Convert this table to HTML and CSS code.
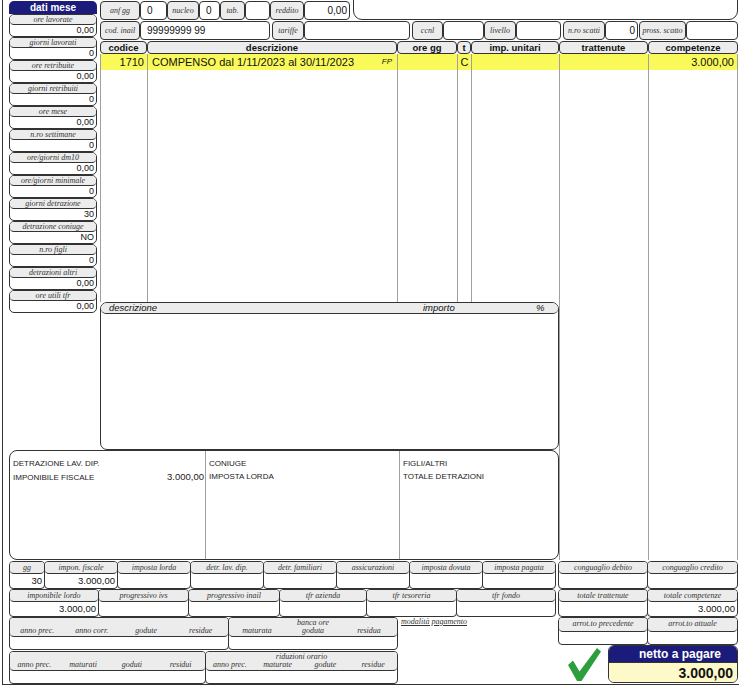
FILE: index.html
```html
<!DOCTYPE html>
<html lang="it">
<head>
<meta charset="utf-8">
<title>Cedolino</title>
<link rel="stylesheet" href="styles.css">
</head>
<body>
<div class="sheet">
  <aside class="panel">
    <div class="panel-head">dati mese</div>
    <div class="pf"><div class="pl">ore lavorate</div><div class="pv">0,00</div></div>
    <div class="pf"><div class="pl">giorni lavorati</div><div class="pv">0</div></div>
    <div class="pf"><div class="pl">ore retribuite</div><div class="pv">0,00</div></div>
    <div class="pf"><div class="pl">giorni retribuiti</div><div class="pv">0</div></div>
    <div class="pf"><div class="pl">ore mese</div><div class="pv">0,00</div></div>
    <div class="pf"><div class="pl">n.ro settimane</div><div class="pv">0</div></div>
    <div class="pf"><div class="pl">ore/giorni dm10</div><div class="pv">0,00</div></div>
    <div class="pf"><div class="pl">ore/giorni minimale</div><div class="pv">0</div></div>
    <div class="pf"><div class="pl">giorni detrazione</div><div class="pv">30</div></div>
    <div class="pf"><div class="pl">detrazione coniuge</div><div class="pv">NO</div></div>
    <div class="pf"><div class="pl">n.ro figli</div><div class="pv">0</div></div>
    <div class="pf"><div class="pl">detrazioni altri</div><div class="pv">0,00</div></div>
    <div class="pf"><div class="pl">ore utili tfr</div><div class="pv">0,00</div></div>
  </aside>

  <div class="topfields">
    <div class="trow trow1">
      <div class="box lab">anf gg</div>
      <div class="box val">0</div>
      <div class="box lab">nucleo</div>
      <div class="box val">0</div>
      <div class="box lab">tab.</div>
      <div class="box val"></div>
      <div class="box lab">reddito</div>
      <div class="box val right">0,00</div>
      <div class="bigbox"></div>
    </div>
    <div class="trow trow2">
      <div class="box lab">cod. inail</div>
      <div class="box val">99999999 99</div>
      <div class="box lab sp2">tariffe</div>
      <div class="box val"></div>
      <div class="box lab sp2">ccnl</div>
      <div class="box val"></div>
      <div class="box lab">livello</div>
      <div class="box val"></div>
      <div class="box lab sp2">n.ro scatti</div>
      <div class="box val right">0</div>
      <div class="box lab sp1">pross. scatto</div>
      <div class="box val"></div>
    </div>
  </div>

  <div class="tleft">
    <div class="tcol"><div class="th">codice</div><div class="tb"><div class="ty num">1710</div></div></div>
    <div class="tcol"><div class="th">descrizione</div><div class="tb"><div class="ty desc"><span>COMPENSO dal 1/11/2023 al 30/11/2023</span><span class="fp">FP</span></div></div></div>
    <div class="tcol"><div class="th">ore gg</div><div class="tb"><div class="ty"></div></div></div>
    <div class="tcol"><div class="th">t</div><div class="tb"><div class="ty ctr">C</div></div></div>
    <div class="tcol"><div class="th">imp. unitari</div><div class="tb"><div class="ty"></div></div></div>
  </div>

  <div class="tright">
    <div class="tcol"><div class="th">trattenute</div><div class="tb"><div class="ty"></div></div></div>
    <div class="tcol"><div class="th">competenze</div><div class="tb last"><div class="ty num">3.000,00</div></div></div>
  </div>

  <div class="descbox">
    <div class="dh"><span class="dh1">descrizione</span><span class="dh2">importo</span><span class="dh3">%</span></div>
  </div>

  <div class="detr">
    <div class="dc">
      <div class="dl">DETRAZIONE LAV. DIP.</div>
      <div class="dl split"><span>IMPONIBILE FISCALE</span><span class="dn">3.000,00</span></div>
    </div>
    <div class="dc">
      <div class="dl">CONIUGE</div>
      <div class="dl">IMPOSTA LORDA</div>
    </div>
    <div class="dc">
      <div class="dl">FIGLI/ALTRI</div>
      <div class="dl">TOTALE DETRAZIONI</div>
    </div>
  </div>

  <div class="bottom">
    <div class="bl">
      <div class="brow ra">
        <div class="bf"><div class="bfl">gg</div><div class="bfv">30</div></div>
        <div class="bf"><div class="bfl">impon. fiscale</div><div class="bfv">3.000,00</div></div>
        <div class="bf"><div class="bfl">imposta lorda</div><div class="bfv"></div></div>
        <div class="bf"><div class="bfl">detr. lav. dip.</div><div class="bfv"></div></div>
        <div class="bf"><div class="bfl">detr. familiari</div><div class="bfv"></div></div>
        <div class="bf"><div class="bfl">assicurazioni</div><div class="bfv"></div></div>
        <div class="bf"><div class="bfl">imposta dovuta</div><div class="bfv"></div></div>
        <div class="bf"><div class="bfl">imposta pagata</div><div class="bfv"></div></div>
      </div>
      <div class="brow rb">
        <div class="bf"><div class="bfl">imponibile lordo</div><div class="bfv">3.000,00</div></div>
        <div class="bf"><div class="bfl">progressivo ivs</div><div class="bfv"></div></div>
        <div class="bf"><div class="bfl">progressivo inail</div><div class="bfv"></div></div>
        <div class="bf"><div class="bfl">tfr azienda</div><div class="bfv"></div></div>
        <div class="bf"><div class="bfl">tfr tesoreria</div><div class="bfv"></div></div>
        <div class="bf"><div class="bfl">tfr fondo</div><div class="bfv"></div></div>
      </div>
      <div class="brow rc">
        <div class="bf tall">
          <div class="bfl g4"><span class="r2">anno prec.</span><span class="r2">anno corr.</span><span class="r2">godute</span><span class="r2">residue</span></div>
          <div class="bfv"></div>
        </div>
        <div class="bf tall">
          <div class="bfl g3"><span class="top c2">banca ore</span><span class="r2">maturata</span><span class="r2">goduta</span><span class="r2">residua</span></div>
          <div class="bfv"></div>
        </div>
        <div class="mod">modalità pagamento</div>
      </div>
      <div class="brow rd">
        <div class="bf tall">
          <div class="bfl g4"><span class="r2">anno prec.</span><span class="r2">maturati</span><span class="r2">goduti</span><span class="r2">residui</span></div>
          <div class="bfv"></div>
        </div>
        <div class="bf tall">
          <div class="bfl g4"><span class="top c23">riduzioni orario</span><span class="r2">anno prec.</span><span class="r2">maturate</span><span class="r2">godute</span><span class="r2">residue</span></div>
          <div class="bfv"></div>
        </div>
      </div>
    </div>

    <div class="br">
      <div class="rr">
        <div class="bf"><div class="bfl">conguaglio debito</div><div class="bfv"></div></div>
        <div class="bf"><div class="bfl">conguaglio credito</div><div class="bfv"></div></div>
      </div>
      <div class="rr">
        <div class="bf"><div class="bfl">totale trattenute</div><div class="bfv"></div></div>
        <div class="bf"><div class="bfl">totale competenze</div><div class="bfv">3.000,00</div></div>
      </div>
      <div class="rr">
        <div class="bf"><div class="bfl ar">arrot.to precedente</div><div class="bfv"></div></div>
        <div class="bf"><div class="bfl ar">arrot.to attuale</div><div class="bfv"></div></div>
      </div>
      <div class="netrow">
        <svg class="check" viewBox="0 0 34 35" width="34" height="35" aria-hidden="true">
          <polygon points="1,18 6,13.5 12.5,24.5 30,1 34,4.5 14.5,34 10,34" fill="#2c9f3c"/>
        </svg>
        <div class="netto">
          <div class="nh">netto a pagare</div>
          <div class="nv">3.000,00</div>
        </div>
      </div>
    </div>
  </div>
</div>
</body>
</html>
```

FILE: styles.css
```css
* { box-sizing: border-box; margin: 0; padding: 0; }
html, body { background: #fff; }
body {
  font-family: "Liberation Sans", Arial, sans-serif;
  color: #111;
  width: 739px;
  height: 686px;
  overflow: hidden;
}

.sheet {
  margin-left: 2px;
  width: 737px;
  height: 685px;
  border-left: 1px solid #333;
  border-bottom: 1px solid #333;
  display: grid;
  grid-template-columns: 6px 88px 3px 459px 89px 90px;
  grid-template-rows: 40px 262px 148px 110px 124px;
}

/* ---------- left panel ---------- */
.panel {
  grid-column: 2;
  grid-row: 1 / 4;
  align-self: start;
  display: flex;
  flex-direction: column;
}
.panel-head {
  margin-top: 1px;
  height: 13px;
  background: #1b1b7b;
  color: #fff;
  font-weight: bold;
  font-size: 10px;
  line-height: 13px;
  text-align: center;
  border-radius: 5px 5px 0 0;
}
.pf {
  height: 23px;
  border: 1px solid #333;
  border-radius: 5px;
  display: flex;
  flex-direction: column;
  overflow: hidden;
}
.pl {
  height: 10px;
  background: #ececec;
  border-bottom: 1px solid #333;
  border-radius: 0 0 4px 4px;
  font-family: "Liberation Serif", "Times New Roman", serif;
  font-style: italic;
  font-size: 8px;
  line-height: 9px;
  color: #333;
  text-align: center;
  white-space: nowrap;
  overflow: hidden;
}
.pv {
  flex: 1;
  font-size: 9px;
  line-height: 11px;
  text-align: right;
  padding-right: 2px;
}

/* ---------- top fields ---------- */
.topfields { grid-column: 4 / 7; grid-row: 1; }
.trow { display: grid; height: 19px; margin-top: 1px; }
.trow1 { grid-template-columns: 40px 27px 32px 21px 25px 25px 34px 46px 388px; }
.trow2 { grid-template-columns: 40px 130px 34px 106px 33px 41px 32px 45px 44px 33px 48px 52px; }
.box {
  border: 1px solid #333;
  border-radius: 4px;
  display: flex;
  align-items: center;
  white-space: nowrap;
  overflow: hidden;
}
.lab {
  background: #ececec;
  justify-content: center;
  font-family: "Liberation Serif", "Times New Roman", serif;
  font-style: italic;
  font-size: 8px;
  color: #333;
}
.val {
  font-size: 10px;
  padding: 0 2px 0 6px;
}
.val.right { justify-content: flex-end; }
.sp2 { margin-left: 2px; }
.sp1 { margin-left: 1px; }
.bigbox {
  margin-left: 3px;
  margin-top: -12px;
  border: 1px solid #333;
  border-radius: 0 0 9px 9px;
}

/* ---------- main table ---------- */
.tleft {
  grid-column: 4;
  grid-row: 2;
  display: grid;
  grid-template-columns: 47px 250px 60px 14px 88px;
}
.tright {
  grid-column: 5 / 7;
  grid-row: 2 / 5;
  display: grid;
  grid-template-columns: 89px 90px;
}
.tcol { display: flex; flex-direction: column; }
.th {
  margin-top: 1px;
  height: 13px;
  border: 1px solid #333;
  border-radius: 4px;
  background: #ececec;
  font-weight: bold;
  font-size: 9.5px;
  line-height: 11px;
  text-align: center;
  white-space: nowrap;
  overflow: hidden;
}
.tb {
  flex: 1;
  border-left: 1px solid #a0a0a0;
}
.tb.last { border-right: 1px solid #a0a0a0; }
.ty {
  height: 16px;
  background: #f9f95a;
  font-size: 11px;
  line-height: 16px;
  white-space: nowrap;
  overflow: hidden;
}
.ty.num { text-align: right; padding-right: 3px; }
.ty.ctr { text-align: center; }
.ty.desc {
  display: flex;
  justify-content: space-between;
  padding: 0 5px 0 4px;
}
.fp { font-style: italic; font-size: 8px; }

/* ---------- description box ---------- */
.descbox {
  grid-column: 4;
  grid-row: 3;
  border: 1px solid #333;
  border-radius: 7px;
  overflow: hidden;
}
.dh {
  height: 11px;
  background: #ececec;
  border-bottom: 1px solid #333;
  border-radius: 0 0 5px 5px;
  display: grid;
  grid-template-columns: 322px 112px 1fr;
  font-style: italic;
  font-size: 9.5px;
  line-height: 10px;
}
.dh1 { padding-left: 8px; }
.dh3 { padding-left: 1px; }

/* ---------- detrazioni ---------- */
.detr {
  grid-column: 2 / 5;
  grid-row: 4;
  border: 1px solid #333;
  border-radius: 8px;
  display: grid;
  grid-template-columns: 195px 194px 1fr;
  overflow: hidden;
}
.dc { padding: 6px 1px 0 3px; }
.dc + .dc { border-left: 1px solid #a0a0a0; }
.dl {
  font-size: 8px;
  line-height: 13px;
  color: #222;
  white-space: nowrap;
}
.dl.split { display: flex; justify-content: space-between; align-items: baseline; }
.dn { font-size: 9.5px; }

/* ---------- bottom ---------- */
.bottom {
  grid-column: 2 / 7;
  grid-row: 5;
  padding-top: 1px;
  display: flex;
}
.bl { width: 548px; display: flex; flex-direction: column; }
.br { width: 181px; padding-left: 1px; display: flex; flex-direction: column; }
.brow { display: grid; }
.ra { height: 28px; grid-template-columns: 36px repeat(7, 73px); }
.rb { height: 28px; grid-template-columns: 90px 90px 91px 87px 90px 99px; }
.rc { height: 33px; grid-template-columns: 220px 169px 1fr; }
.rd { height: 33px; margin-top: 1px; grid-template-columns: 197px 192px 1fr; }
.rr { height: 28px; display: grid; grid-template-columns: 90px 90px; }

.bf {
  border: 1px solid #333;
  border-radius: 4px;
  display: flex;
  flex-direction: column;
  overflow: hidden;
  background: #fff;
}
.bf + .bf { margin-left: -1px; }
.bfl {
  height: 12px;
  background: #ececec;
  border-bottom: 1px solid #333;
  border-radius: 0 0 4px 4px;
  font-family: "Liberation Serif", "Times New Roman", serif;
  font-style: italic;
  font-size: 8px;
  line-height: 11px;
  color: #333;
  text-align: center;
  white-space: nowrap;
  overflow: hidden;
}
.bfl.ar { height: 14px; line-height: 12px; }
.bfv {
  flex: 1;
  font-size: 9.5px;
  line-height: 14px;
  text-align: right;
  padding-right: 2px;
}
.bf.tall .bfl {
  height: 19px;
  display: grid;
  grid-template-rows: 8px 10px;
  line-height: 8px;
}
.g4 { grid-template-columns: repeat(4, 1fr); }
.g3 { grid-template-columns: repeat(3, 1fr); }
.bfl .top { grid-row: 1; padding-top: 1px; }
.bfl .c2 { grid-column: 2; }
.bfl .c23 { grid-column: 2 / 4; }
.bfl .r2 { grid-row: 2; align-self: end; padding-bottom: 1px; }
.mod {
  margin-left: 3px;
  font-family: "Liberation Serif", "Times New Roman", serif;
  font-style: italic;
  font-size: 8px;
  line-height: 9px;
  color: #333;
  text-decoration: underline;
  white-space: nowrap;
}

.netrow { display: flex; align-items: flex-start; height: 39px; }
.check { margin: 2px 0 0 9px; }
.netto {
  margin-left: auto;
  width: 130px;
  height: 38px;
  border: 1px solid #333;
  border-radius: 6px;
  overflow: hidden;
  display: flex;
  flex-direction: column;
}
.nh {
  height: 16px;
  background: #1b1b7b;
  color: #fff;
  font-weight: bold;
  font-size: 12px;
  line-height: 16px;
  text-align: center;
  padding-left: 14px;
}
.nv {
  flex: 1;
  background: #fdf9c9;
  border-top: 1px solid #333;
  font-weight: bold;
  font-size: 14px;
  line-height: 20px;
  text-align: right;
  padding-right: 4px;
}
```
